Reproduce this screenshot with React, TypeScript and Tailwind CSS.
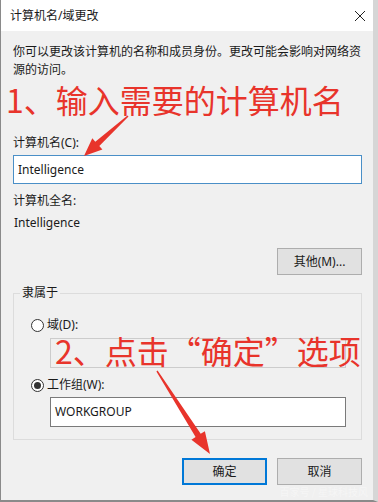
import * as React from "react";

type Pt = [number, number];

// tapered arrow polygon: thin at tail, widening towards the head
function arrowPoints(tail: Pt, tip: Pt, tailW: number, neckW: number, headLen: number, headW: number): string {
  const dx = tip[0] - tail[0];
  const dy = tip[1] - tail[1];
  const len = Math.hypot(dx, dy);
  const ux = dx / len;
  const uy = dy / len;
  const nx = -uy;
  const ny = ux;
  const neck: Pt = [tip[0] - ux * headLen, tip[1] - uy * headLen];
  const pts: Pt[] = [
    [tail[0] + (nx * tailW) / 2, tail[1] + (ny * tailW) / 2],
    [neck[0] + (nx * neckW) / 2, neck[1] + (ny * neckW) / 2],
    [neck[0] + (nx * headW) / 2, neck[1] + (ny * headW) / 2],
    tip,
    [neck[0] - (nx * headW) / 2, neck[1] - (ny * headW) / 2],
    [neck[0] - (nx * neckW) / 2, neck[1] - (ny * neckW) / 2],
    [tail[0] - (nx * tailW) / 2, tail[1] - (ny * tailW) / 2],
  ];
  return pts.map((p) => `${p[0].toFixed(1)},${p[1].toFixed(1)}`).join(" ");
}

function Radio({ checked, label }: { checked?: boolean; label: string }) {
  return (
    <div className="flex items-center gap-[3px] h-[16px]">
      <span className="w-[13px] h-[13px] rounded-full border border-[#333] bg-white flex items-center justify-center">
        {checked ? <span className="w-[7px] h-[7px] rounded-full bg-[#333]" /> : null}
      </span>
      <span>{label}</span>
    </div>
  );
}

function WinButton({ children, focused }: { children: React.ReactNode; focused?: boolean }) {
  return (
    <div
      className={
        focused
          ? "w-[85px] h-[27px] border-2 border-[#0078d7] bg-[#e1e1e1] flex items-center justify-center"
          : "w-[85px] h-[27px] border border-[#adadad] bg-[#e1e1e1] flex items-center justify-center"
      }
    >
      {children}
    </div>
  );
}

export default function App() {
  return (
    <div className="relative w-[378px] h-[502px] overflow-hidden bg-[#f0f0f0] text-[12px] text-[#1a1a1a] font-['Noto_Sans','Noto_Sans_CJK_SC',sans-serif]">
      <div className="absolute inset-0 border-l border-r-[5px] border-b-2 border-l-[#8a8a8a] border-r-[#d6d6d6] border-b-[#8a8a8a] pointer-events-none" />

      {/* title bar */}
      <div className="h-[31px] bg-white flex items-center justify-between pl-[10px] pr-[12px]">
        <span className="text-[12px]">计算机名/域更改</span>
        <svg width="12" height="12" viewBox="0 0 12 12">
          <path d="M1 1 L11 11 M11 1 L1 11" stroke="#222" strokeWidth="1" fill="none" />
        </svg>
      </div>

      <div className="pl-[13px] pr-[16px]">
        <p className="pt-[12px] leading-[18px] w-[350px]">
          你可以更改该计算机的名称和成员身份。更改可能会影响对网络资源的访问。
        </p>

        <div className="mt-[56px] leading-[16px]">计算机名(C):</div>
        <div className="mt-[4px] h-[29px] w-[349px] border border-[#4a8fc7] bg-white flex items-center px-[4px]">
          Intelligence
        </div>

        <div className="mt-[9px] leading-[16px]">计算机全名:</div>
        <div className="mt-[6px] leading-[16px] pl-[1px]">Intelligence</div>

        <div className="mt-[17px] w-[349px] flex justify-end">
          <WinButton>其他(M)...</WinButton>
        </div>

        {/* group box */}
        <div className="relative mt-[18px] w-[349px] h-[147px] border border-[#dcdcdc]">
          <span className="absolute left-[6px] top-[-9px] bg-[#f0f0f0] px-[2px] leading-[16px]">隶属于</span>
          <div className="pl-[17px] pt-[23px]">
            <Radio label="域(D):" />
            <div className="ml-[19px] mt-[5px] w-[296px] h-[30px] border border-[#cccccc] bg-[#f0f0f0]" />
            <div className="mt-[9px]">
              <Radio checked label="工作组(W):" />
            </div>
            <div className="ml-[19px] mt-[4px] w-[296px] h-[30px] border border-[#7a7a7a] bg-white flex items-center px-[4px]">
              WORKGROUP
            </div>
          </div>
        </div>

        <div className="mt-[18px] w-[349px] flex justify-end gap-[10px]">
          <WinButton focused>确定</WinButton>
          <WinButton>取消</WinButton>
        </div>
      </div>

      {/* annotations */}
      <div className="absolute left-[6px] top-[79px] text-[32px] leading-[40px] text-[#e8342b] whitespace-nowrap font-['Noto_Sans_CJK_SC',sans-serif]">
        1、输入需要的计算机名
      </div>
      <div className="absolute left-[55px] top-[330px] text-[32px] leading-[40px] text-[#e8342b] whitespace-nowrap font-['Noto_Sans_CJK_SC',sans-serif]">
        2、点击“确定”选项
      </div>
      <svg className="absolute left-0 top-0 pointer-events-none" width="378" height="502" viewBox="0 0 378 502">
        <polygon points={arrowPoints([128, 116], [84, 156], 1.5, 6, 18, 15)} fill="#e8342b" />
        <polygon points={arrowPoints([157, 371], [210, 454], 1.5, 6, 22, 16)} fill="#e8342b" />
      </svg>

      <div className="absolute right-[10px] bottom-[4px] text-[10px] leading-[12px] text-white/40 font-['Noto_Sans_CJK_SC',sans-serif]">
        百家号 / 星球科技风
      </div>
    </div>
  );
}
